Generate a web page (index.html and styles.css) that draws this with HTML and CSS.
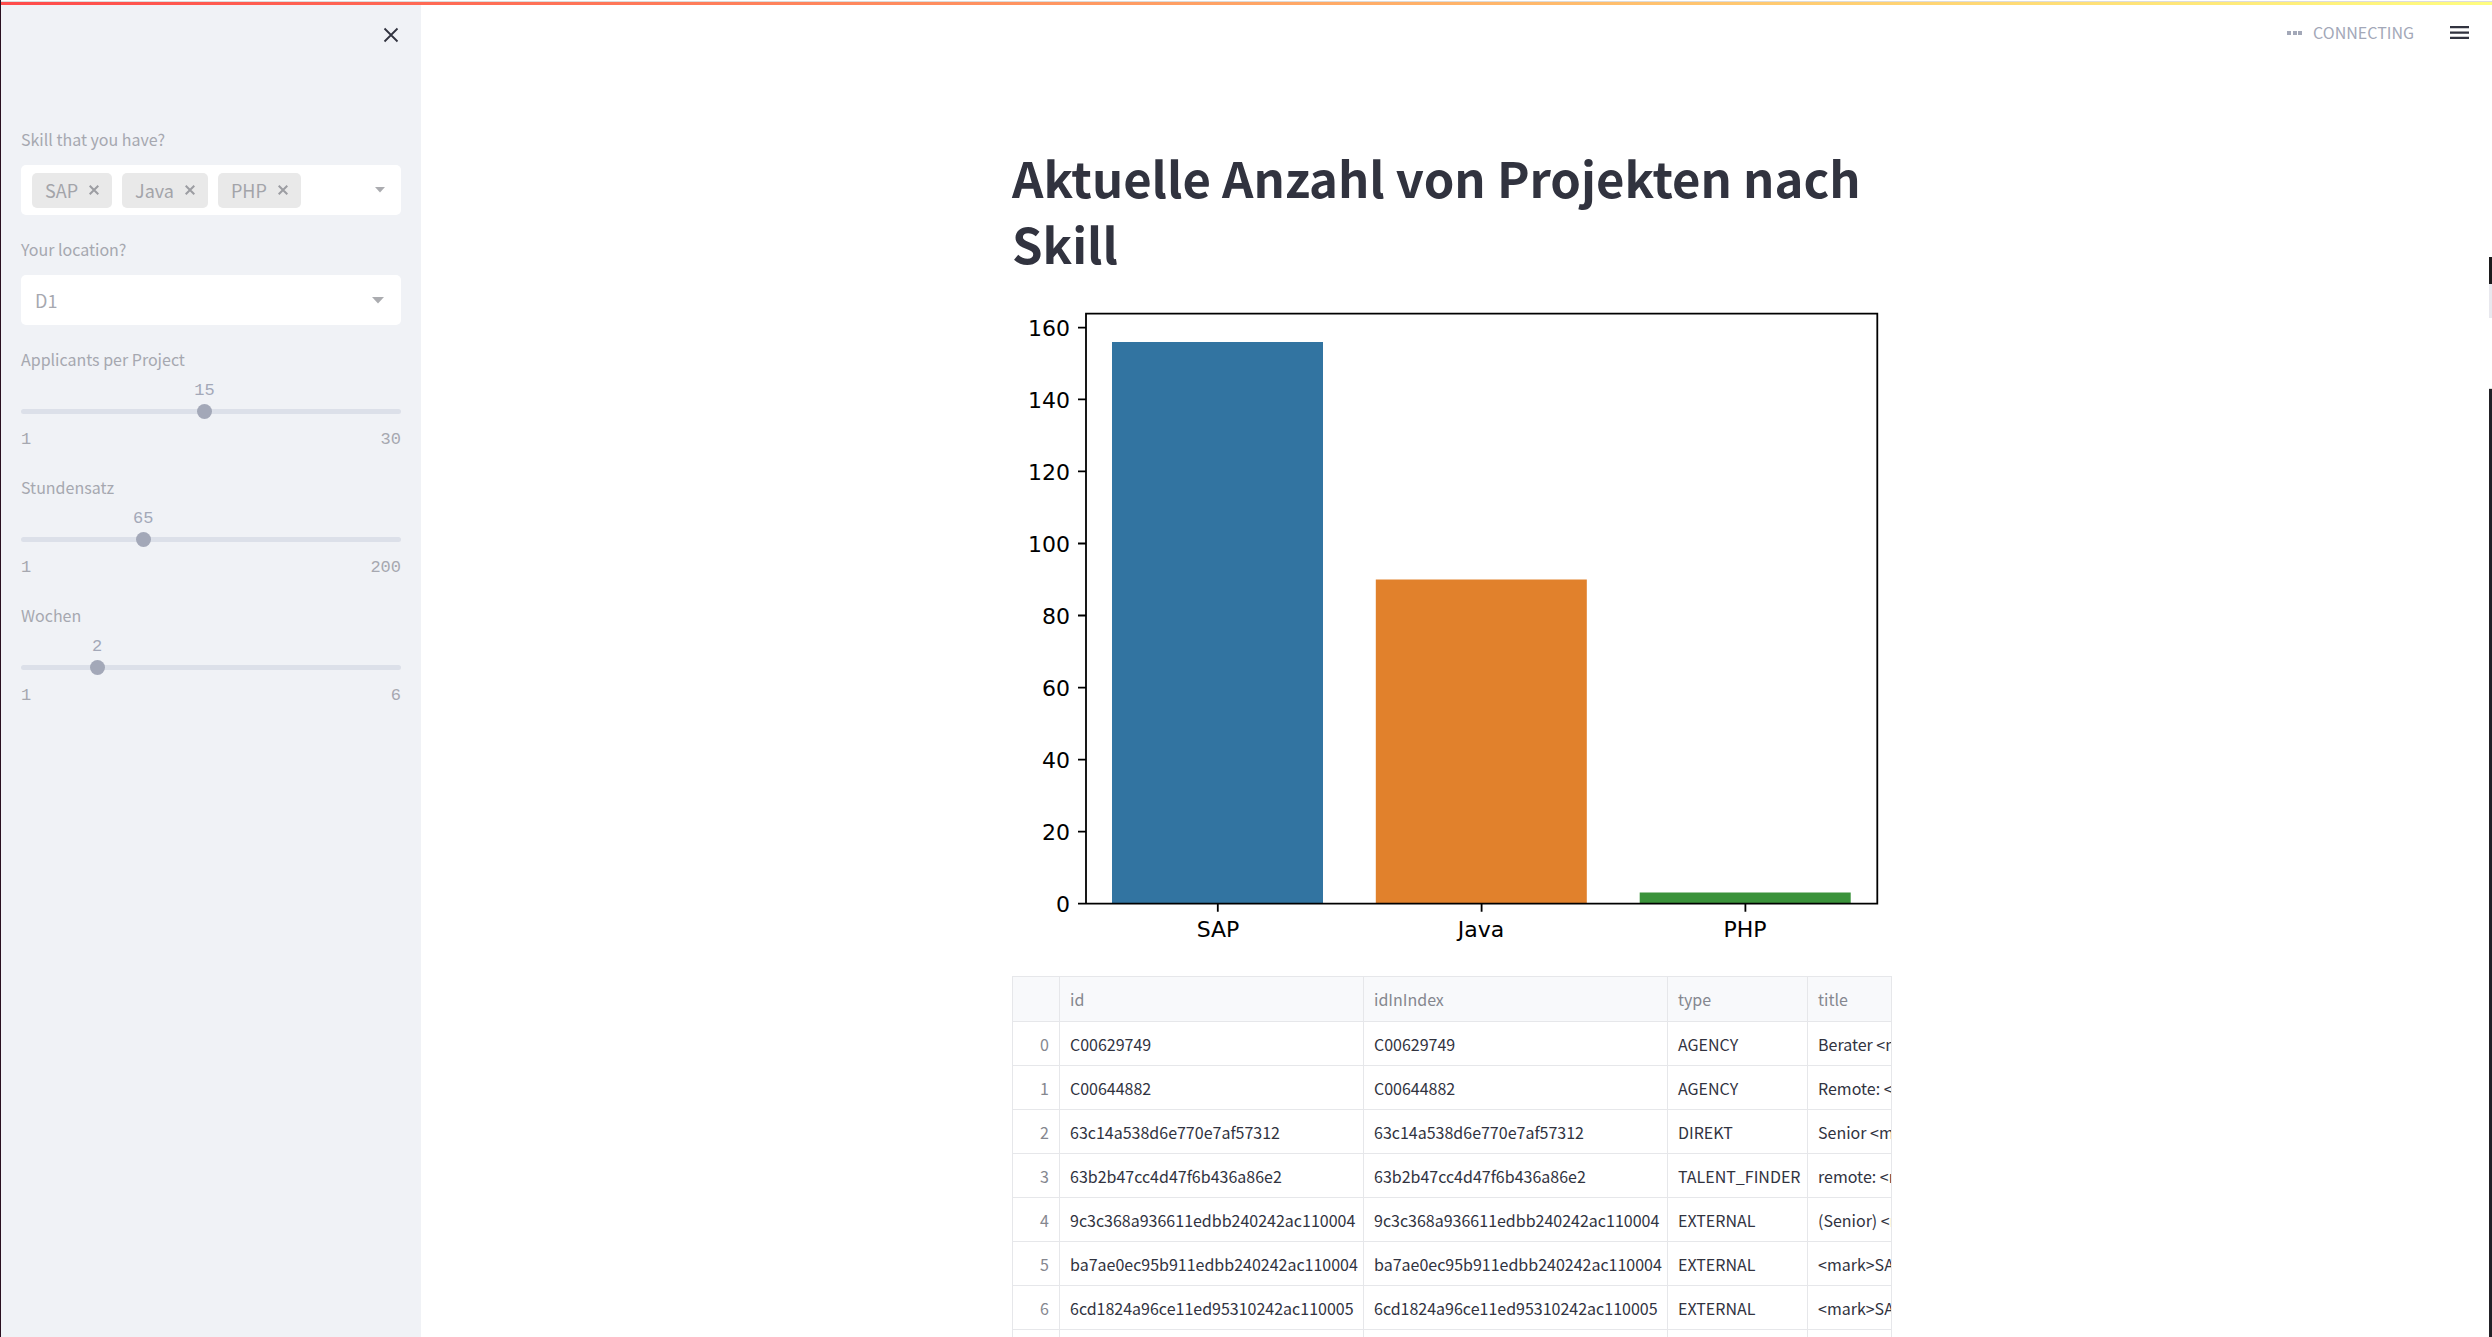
FILE: index.html
```
<!DOCTYPE html>
<html lang="de">
<head>
<meta charset="utf-8">
<meta name="viewport" content="width=device-width, initial-scale=1">
<title>Aktuelle Anzahl von Projekten nach Skill</title>
<link rel="stylesheet" href="styles.css">
</head>
<body>
<div class="decoration"></div>
<div class="app">
  <aside class="sidebar">
    <div class="sidebar-head">
      <button class="icon-button" type="button" aria-label="Close sidebar">
        <svg width="16" height="16" viewBox="0 0 16 16"><path d="M1.500 1.500l13 13M14.500 1.500l-13 13" stroke="#31333f" stroke-width="1.800" fill="none"/></svg>
      </button>
    </div>
    <form class="controls">
      <div class="field">
        <span class="label" id="skill-label">Skill that you have?</span>
        <div class="box tags" role="group" aria-labelledby="skill-label">
          <span class="tag">SAP<button type="button" class="tag-remove" aria-label="Remove SAP"><svg width="10" height="10" viewBox="0 0 10 10"><path d="M.7.7l8.600 8.600M9.300.7L.7 9.300"/></svg></button></span>
          <span class="tag">Java<button type="button" class="tag-remove" aria-label="Remove Java"><svg width="10" height="10" viewBox="0 0 10 10"><path d="M.7.7l8.600 8.600M9.300.7L.7 9.300"/></svg></button></span>
          <span class="tag">PHP<button type="button" class="tag-remove" aria-label="Remove PHP"><svg width="10" height="10" viewBox="0 0 10 10"><path d="M.7.7l8.600 8.600M9.300.7L.7 9.300"/></svg></button></span>
          <button type="button" class="tags-open" aria-label="Open"><svg width="10" height="6" viewBox="0 0 10 6"><path d="M0 0h10L5 5.500z"/></svg></button>
        </div>
      </div>
      <div class="field">
        <label class="label" for="location">Your location?</label>
        <div class="box select-box">
          <select id="location" class="select"><option>D1</option></select>
          <svg class="select-arrow" width="12" height="7" viewBox="0 0 12 7"><path d="M0 0h12L6 6.500z"/></svg>
        </div>
      </div>
      <div class="field slider-field">
        <label class="label" for="applicants">Applicants per Project</label>
        <div class="slider">
          <output class="value" for="applicants" style="left:48.276%">15</output>
          <span class="track"></span>
          <input id="applicants" type="range" min="1" max="30" value="15">
        </div>
        <div class="limits"><span>1</span><span>30</span></div>
      </div>
      <div class="field slider-field">
        <label class="label" for="rate">Stundensatz</label>
        <div class="slider">
          <output class="value" for="rate" style="left:32.161%">65</output>
          <span class="track"></span>
          <input id="rate" type="range" min="1" max="200" value="65">
        </div>
        <div class="limits"><span>1</span><span>200</span></div>
      </div>
      <div class="field slider-field">
        <label class="label" for="weeks">Wochen</label>
        <div class="slider">
          <output class="value" for="weeks" style="left:20%">2</output>
          <span class="track"></span>
          <input id="weeks" type="range" min="1" max="6" value="2">
        </div>
        <div class="limits"><span>1</span><span>6</span></div>
      </div>
    </form>
  </aside>

  <div class="view">
    <header class="toolbar">
      <svg width="16" height="4" viewBox="0 0 16 4" fill="#a3a8b8"><path d="M0 0h4v4H0zM6 0h4v4H6zM11 0h4v4h-4z"/></svg>
      <span class="status">CONNECTING</span>
      <button class="icon-button" type="button" aria-label="Menu">
        <svg width="20" height="14" viewBox="0 0 20 14" fill="#31333f"><path d="M0 0h19v2.200H0zM0 5.500h19v2.200H0zM0 10.800h19v2.200H0z"/></svg>
      </button>
    </header>
    <main class="content">
      <h1>Aktuelle Anzahl von Projekten nach Skill</h1>
      <svg class="chart" viewBox="0 0 880 650" role="img" aria-label="Projekte nach Skill">
        <rect x="100" y="34" width="211" height="561.500" fill="#3274a1"/>
        <rect x="363.800" y="271.500" width="211" height="324" fill="#e1812c"/>
        <rect x="627.700" y="584.500" width="211" height="11" fill="#3a923a"/>
        <path d="M74 5.700h791.300v590H74zM74 595.700h-8M74 523.700h-8M74 451.600h-8M74 379.600h-8M74 307.500h-8M74 235.500h-8M74 163.400h-8M74 91.400h-8M74 19.700h-8M205.800 595.700v8M469.600 595.700v8M733.400 595.700v8" fill="none" stroke="#000" stroke-width="1.800"/>
        <g class="ticks-y">
          <text x="58" y="604">0</text>
          <text x="58" y="532">20</text>
          <text x="58" y="460">40</text>
          <text x="58" y="388">60</text>
          <text x="58" y="316">80</text>
          <text x="58" y="244">100</text>
          <text x="58" y="172">120</text>
          <text x="58" y="100">140</text>
          <text x="58" y="28">160</text>
        </g>
        <g class="ticks-x">
          <text x="206" y="629">SAP</text>
          <text x="469" y="629">Java</text>
          <text x="733" y="629">PHP</text>
        </g>
      </svg>
      <div class="table-frame">
        <table>
          <colgroup><col class="col-index"><col class="col-id"><col class="col-id"><col class="col-type"><col class="col-title"></colgroup>
          <thead><tr><th></th><th>id</th><th>idInIndex</th><th>type</th><th>title</th></tr></thead>
          <tbody>
            <tr><th>0</th><td>C00629749</td><td>C00629749</td><td>AGENCY</td><td>Berater &lt;mark&gt;</td></tr>
            <tr><th>1</th><td>C00644882</td><td>C00644882</td><td>AGENCY</td><td>Remote: &lt;mark&gt;</td></tr>
            <tr><th>2</th><td>63c14a538d6e770e7af57312</td><td>63c14a538d6e770e7af57312</td><td>DIREKT</td><td>Senior &lt;mark&gt;</td></tr>
            <tr><th>3</th><td>63b2b47cc4d47f6b436a86e2</td><td>63b2b47cc4d47f6b436a86e2</td><td>TALENT_FINDER</td><td>remote: &lt;mark&gt;</td></tr>
            <tr><th>4</th><td>9c3c368a936611edbb240242ac110004</td><td>9c3c368a936611edbb240242ac110004</td><td>EXTERNAL</td><td>(Senior) &lt;mark&gt;</td></tr>
            <tr><th>5</th><td>ba7ae0ec95b911edbb240242ac110004</td><td>ba7ae0ec95b911edbb240242ac110004</td><td>EXTERNAL</td><td>&lt;mark&gt;SAP</td></tr>
            <tr><th>6</th><td>6cd1824a96ce11ed95310242ac110005</td><td>6cd1824a96ce11ed95310242ac110005</td><td>EXTERNAL</td><td>&lt;mark&gt;SAP</td></tr>
            <tr><th></th><td></td><td></td><td></td><td></td></tr>
          </tbody>
        </table>
      </div>
    </main>
  </div>
</div>
<div class="edge"></div>
</body>
</html>
```
FILE: styles.css
```
* { box-sizing: border-box; }

body {
  margin: 0;
  background: #fff;
  color: #31333f;
  font-family: "Noto Sans CJK SC", "Open Sans", sans-serif;
  font-size: 16px;
  line-height: 24px;
}

button, select, input { font: inherit; color: inherit; margin: 0; }
button { border: 0; padding: 0; background: none; cursor: pointer; }
svg { display: block; }

/* Gradient bar over the top of the window */
.decoration {
  position: absolute;
  z-index: 2;
  top: 0;
  left: 1px;
  right: 0;
  height: 5px;
  border-top: 1px solid #fff;
  background: linear-gradient(#dcdcdc, #dcdcdc) top / 100% 1px no-repeat,
    linear-gradient(90deg, #ff4b4b, #fffd80);
}

.app {
  display: flex;
  height: 100vh;
  overflow: hidden;
  border-left: 1px solid #2a1020;
}

/* Sidebar */
.sidebar {
  flex: 0 0 420px;
  padding: 0 20px;
  background: #f0f2f6;
}

.sidebar-head {
  display: flex;
  justify-content: flex-end;
  padding: 27px 2px 0 0;
  height: 128px;
}

.icon-button { align-self: flex-start; }

.controls { display: flex; flex-direction: column; gap: 23px; }
.field { display: flex; flex-direction: column; color: #a6a8b0; }
.label { height: 37px; line-height: 22px; }

.box {
  display: flex;
  align-items: center;
  height: 50px;
  border-radius: 5px;
  background: #fff;
  font-size: 18px;
}

.tags { gap: 10px; padding: 0 16px 0 11px; }
.tag {
  display: flex;
  align-items: center;
  gap: 11px;
  height: 35px;
  padding: 0 13px;
  border-radius: 5px;
  background: #e9e9e9;
  color: #a3a4a9;
}
.tag-remove svg { stroke: #9c9da2; stroke-width: 2; }
.tags-open { margin-left: auto; padding: 4px 0; }
.tags-open svg, .select-arrow { fill: #abacb0; }

.select-box { display: grid; grid-template-columns: 1fr auto; padding-right: 17px; }
.select {
  grid-area: 1 / 1 / 2 / 3;
  width: 100%;
  height: 50px;
  padding: 0 14px;
  border: 0;
  background: none;
  appearance: none;
}
.select-arrow { grid-area: 1 / 2; }

.slider-field { height: 105px; }
.slider-field .label { height: 56px; }
.slider { position: relative; display: grid; align-items: center; height: 15px; }
.track { grid-area: 1 / 1; height: 5px; border-radius: 3px; background: #dce0e9; }
.slider input {
  grid-area: 1 / 1;
  width: calc(100% + 15px);
  height: 15px;
  margin: 0 -7px;
  background: none;
  appearance: none;
}
.slider input::-webkit-slider-thumb {
  appearance: none;
  width: 15px;
  height: 15px;
  border-radius: 50%;
  background: #a3a8b8;
}
.value {
  position: absolute;
  bottom: 16px;
  transform: translateX(-50%);
  color: #a3a8b8;
}
.value, .limits { font-family: "Liberation Mono", monospace; font-size: 17px; }
.limits { display: flex; justify-content: space-between; padding-top: 9px; }

/* Main view */
.view { flex: 1; min-width: 0; padding-right: 9px; }

.toolbar {
  display: flex;
  align-items: center;
  justify-content: flex-end;
  gap: 10px;
  height: 66px;
  padding: 0 13px 0 0;
}
.toolbar .icon-button { align-self: center; margin-left: 26px; }
.status { color: #a3a8b8; line-height: 22px; padding-bottom: 2px; }

.content { max-width: 920px; margin: 0 auto; padding: 78px 20px 0; }

h1 { margin: 0 0 32px; font-size: 49px; font-weight: 700; line-height: 66px; }

.chart { width: 100%; height: auto; margin-bottom: 18px; font-family: "DejaVu Sans", sans-serif; font-size: 22px; }
.ticks-y { text-anchor: end; }
.ticks-x { text-anchor: middle; }

.table-frame { overflow: hidden; border: 1px solid #e6e7ea; }
table { width: 1000px; table-layout: fixed; border-collapse: separate; border-spacing: 0; }
.col-index { width: 47px; }
.col-id { width: 304px; }
.col-type { width: 140px; }
th, td {
  height: 44px;
  padding: 0 10px;
  border-right: 1px solid #e6e7ea;
  border-bottom: 1px solid #e6e7ea;
  font-weight: 400;
  text-align: left;
  white-space: nowrap;
}
th { color: #85878f; }
thead th { height: 45px; background: #f8f9fb; }
tbody th { text-align: right; }

/* Neighbouring window showing at the right edge */
.edge {
  position: absolute;
  top: 257px;
  right: 0;
  bottom: 0;
  width: 3px;
  background: linear-gradient(#1c1b1d 27px, #e8e8ee 27px 61px, #fff 61px 131px, #dcdcdc 131px 132px, #222126 132px);
}
```
